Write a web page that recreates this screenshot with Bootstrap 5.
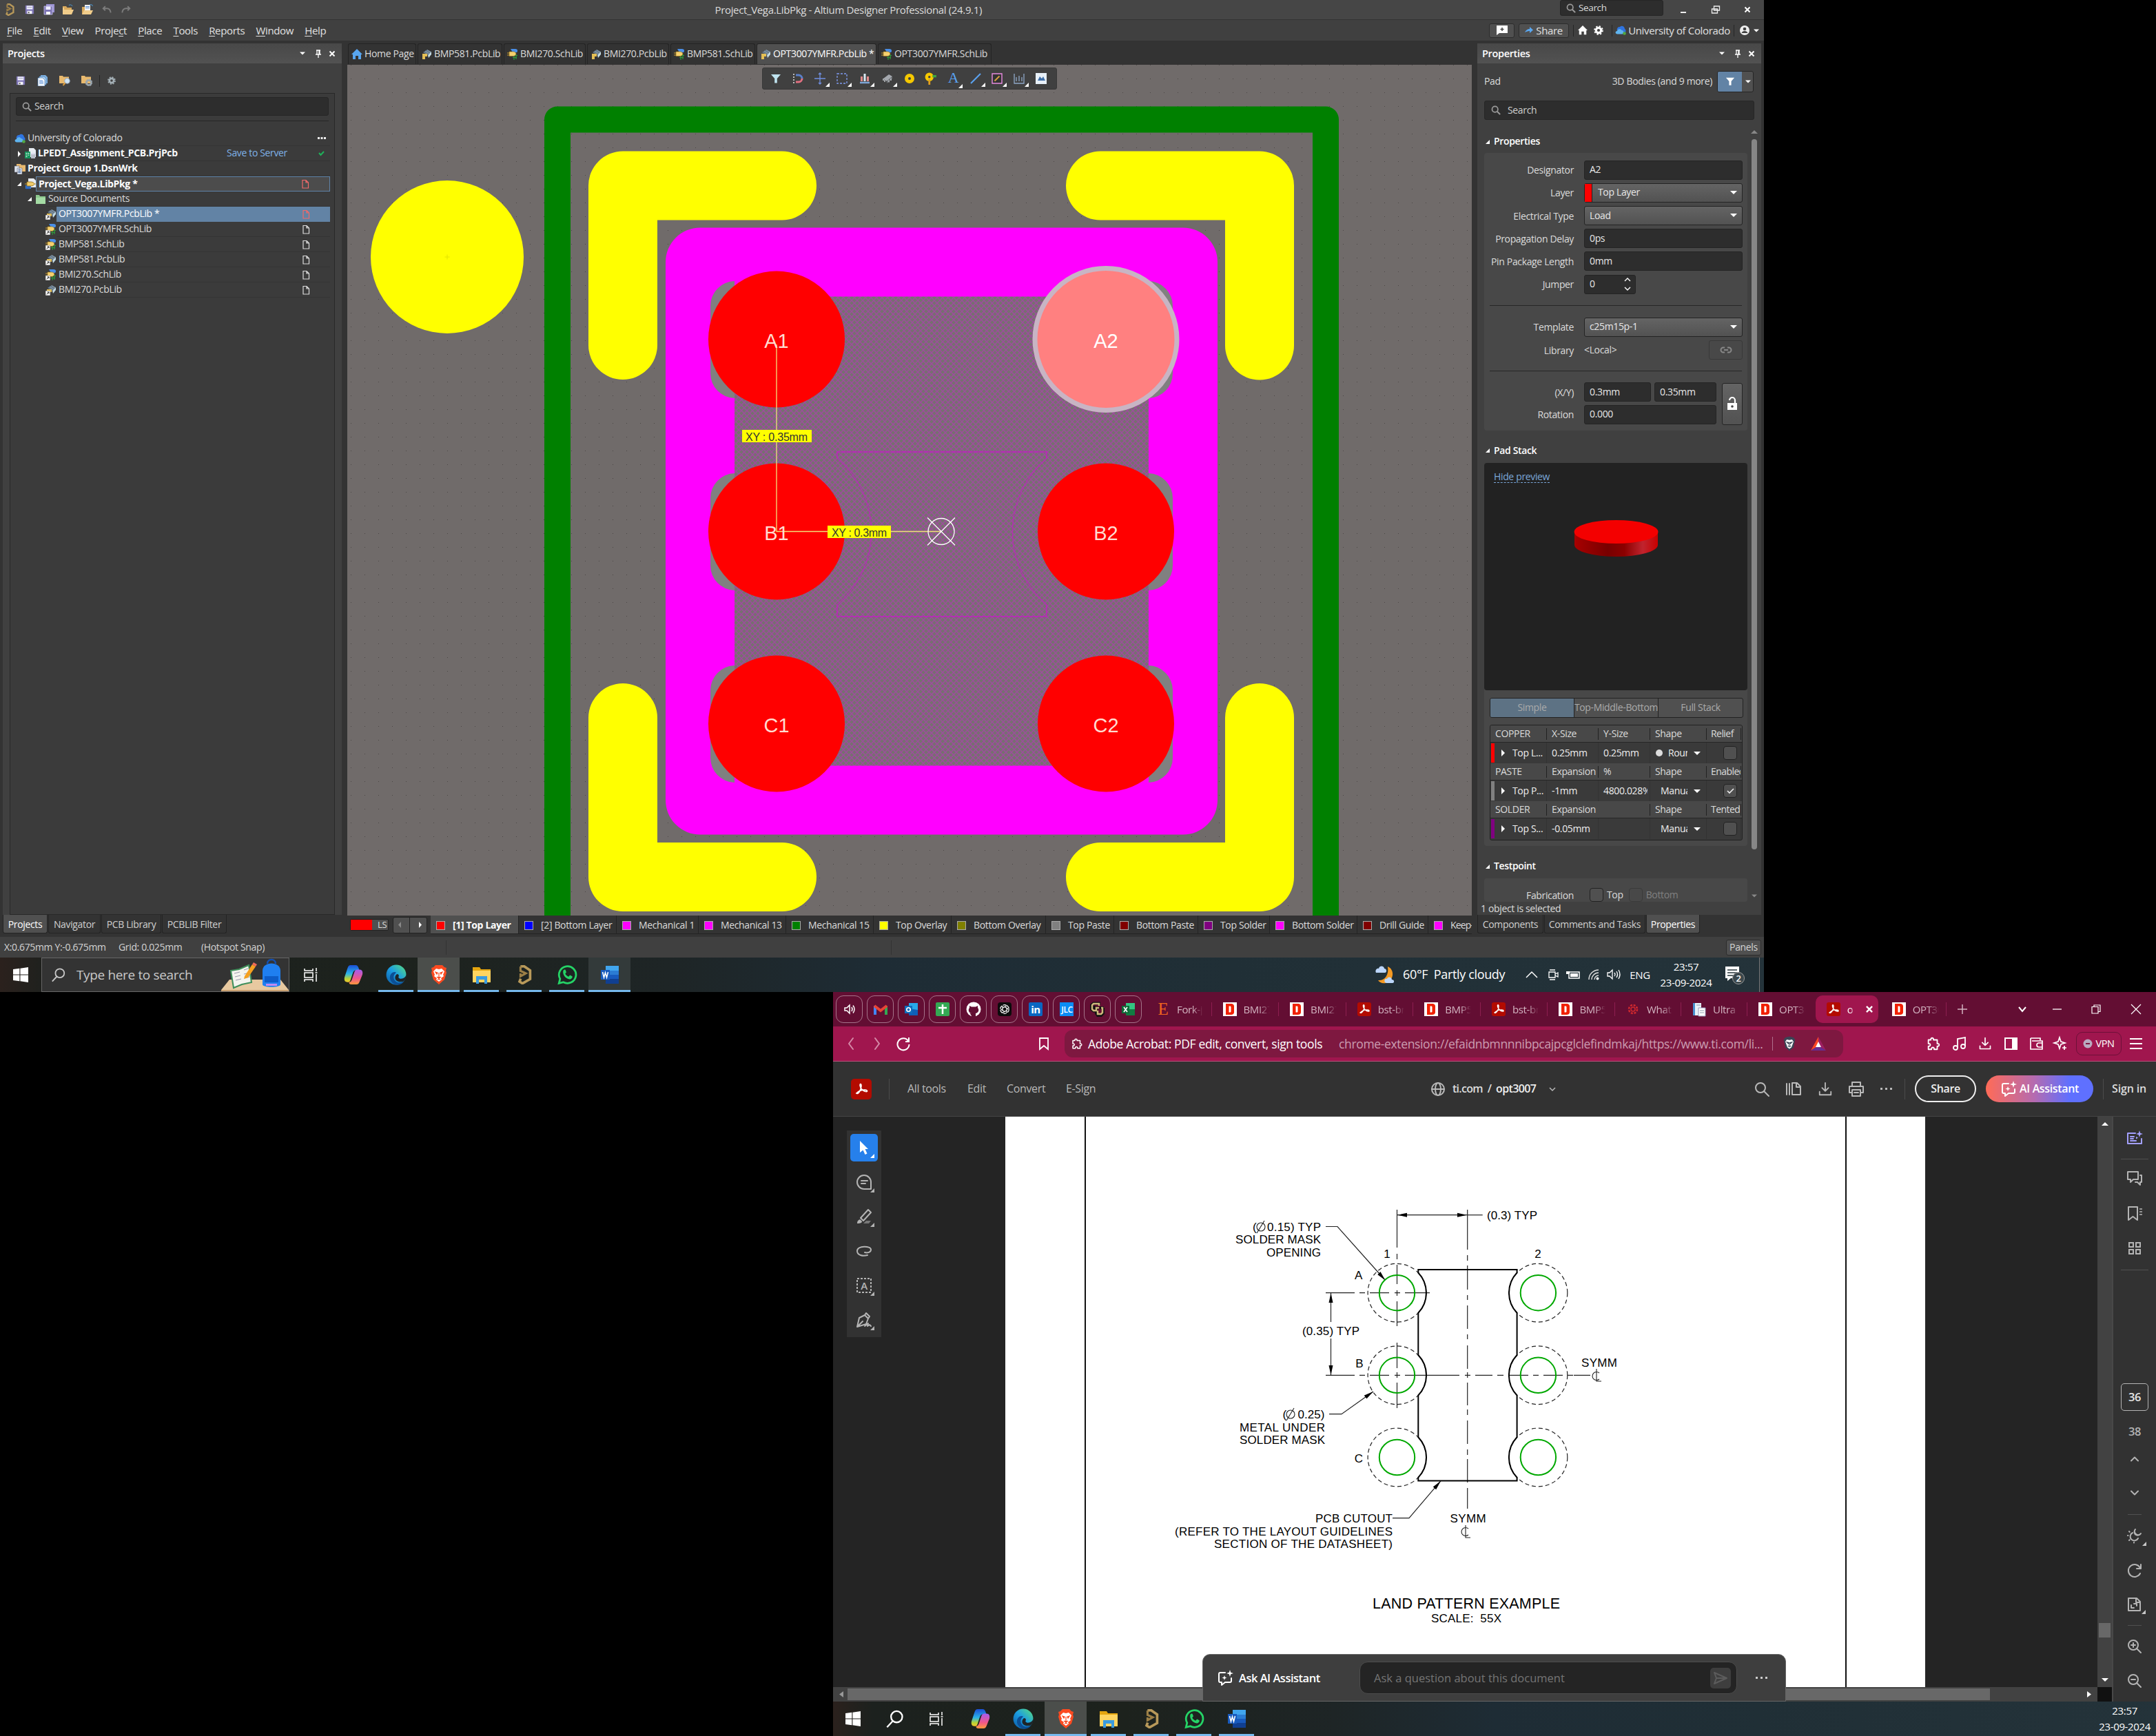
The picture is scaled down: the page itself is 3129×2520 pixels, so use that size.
<!DOCTYPE html>
<html lang="en">
<head>
<meta charset="utf-8">
<title>Altium Designer and Acrobat</title>
<link href="https://cdn.jsdelivr.net/npm/bootstrap@5.3.0/dist/css/bootstrap.min.css" rel="stylesheet">
<style>
body{margin:0;width:3129px;height:2520px;background:#000;overflow:hidden;font-family:"Open Sans","Noto Sans",sans-serif;font-size:14px;line-height:1.2;letter-spacing:-.025em;color:#dcdcdc}
svg{display:block;flex:none;overflow:visible}
.i12{width:12px;height:12px}.i14{width:14px;height:14px}.i16{width:16px;height:16px}.i18{width:18px;height:18px}.i20{width:20px;height:20px}.i22{width:22px;height:22px}.i24{width:24px;height:24px}.i28{width:28px;height:28px}.i30{width:30px;height:30px}
.ln{fill:none;stroke:currentColor;stroke-width:2;stroke-linecap:round;stroke-linejoin:round}
.gr{display:grid;align-items:center;justify-items:center}
.nw,.gr span,.d-flex span{white-space:pre}
b{font-weight:600}
u{text-underline-offset:2px;text-decoration-thickness:1px}
.clip{overflow:hidden}
/* monitor one */
.mon1{width:2560px;height:1440px;background:#333}
.titlebar{height:29px;background:#464646;border-bottom:1px solid #333;grid-template-columns:28px 29px 28px 28px 28px 28px 28px 2067px 150px 58px 36px 56px;justify-content:start}
.titlebar .ttl{font-size:15px;width:388px;margin-left:2px}
.menubar{height:30px;background:#404040;font-size:15px;color:#e0e0e0}
.mnu{padding-left:10px}
.mnu span{margin-right:16.2px}
.toppill{width:150px;height:23px;margin-top:-5px;background:#2d2d2d;border:1px solid #262626;border-radius:3px;font-size:13.5px}
.mbtn{height:21px;background:#505050;border:1px solid #2c2c2c;border-radius:3px}
.vsep{width:1px;height:17px;background:#262626}
.work{height:1301px;padding:4px 4px 0}
.panelhead{height:29px;background:linear-gradient(#484848,#525252);font-size:14.5px;color:#fff;padding:0 8px 0 7px}
.pnl{background:#404040}
.projpanel{width:492px;height:1265px}
.projtools{height:43px;padding-top:7px;grid-template-columns:32px 32px 32px 32px 4px 32px;justify-content:start;padding-left:10px}
.treebox{margin:0 10px;height:1193px;background:#3b3b3b;border:1px solid #282828}
.treebox b,.ly b{font-weight:700}
.searchbx{background:#2d2d2d;border:1px solid #262626;border-radius:3px;height:27px;color:#cfcfcf}
.treebox hr{margin:7px 8px 14px;border:0;height:1px;background:#262626;opacity:1}
.trow{height:22px;margin:0 6px}
.trow .tc{height:22px;border-bottom:1px solid #343434;padding-left:3px}
.lv1{padding-left:4px}.lv2{padding-left:19px}.lv3{padding-left:45px}
.arr{width:11px;font-size:9px;color:#fff}
.cur{border:1px solid #5f83a8!important;background:#4c4c4c;color:#fff}
.sel{background:#6283a5;border-color:#6283a5!important;color:#fff}
.dc{margin-right:29px;width:12px;height:14px}
.btabs{height:26px}
.btabs>div{height:27px;padding:3px 8px 0;border:1px solid #242424;border-top:0;border-radius:0 0 3px 3px;background:#333;display:flex;align-items:center;justify-content:center;margin-right:1px;font-size:14px;color:#d0d0d0;white-space:pre}
.btabs>.on{background:#505050;color:#fff}
.midcol{width:1632px;margin-left:8px;margin-right:8px}
.doctabs{height:31px;grid-template-columns:101px 125px 121px 121px 125px 176px 167px;justify-content:start}
.doctabs>div{height:30px;width:calc(100% - 2px);border:1px solid #242424;border-bottom:0;border-radius:3px 3px 0 0;padding-left:4px;gap:3px;font-size:14px;white-space:nowrap;align-self:start}
.doctabs>.on{background:#505050;color:#fff}
.pcb{position:relative;height:1235px}
.floatbar{position:absolute;left:602px;top:4px;width:428px;height:32px;background:#404040;border:1px solid #383838;border-radius:3px;grid-template-columns:32px 32px 32px 32px 34px 32px 31px 32px 33px 31px 32px 32px 32px;padding-left:3px}
.floatbar>div{position:relative}
.floatA{font:22px/18px "Liberation Serif",serif;color:#5aa2f0}
.tri::after{content:"";position:absolute;right:-6px;bottom:-4px;border:3px solid transparent;border-right-color:#fff;border-bottom-color:#fff}
.laytabs{height:27px;overflow:hidden;padding-left:4px}
.lsb{width:56px;height:17px;border:1px solid #222;border-radius:2px;background:#505050;margin-right:6px;font-size:13px}
.lsb i{width:31px;height:15px;background:#f00}
.pgr{width:50px;height:24px;background:#505050;border:1px solid #222;border-radius:3px;margin-right:5px;font-size:9px}
.ly{height:27px;padding-top:2px;border:1px solid #242424;border-width:0 1px 1px 0;padding-left:8px;flex:none;white-space:nowrap;gap:11px;font-size:14px}
.ly i{width:13px;height:13px;border:1px solid #aaa;flex:none}
.ly.on{background:#505050;color:#fff}
.w1{width:128px}.w2{width:142px}.w3{width:119px}.w4{width:127px}.w5{width:127px}.w6{width:113px}.w7{width:137px}.w8{width:99px}.w9{width:122px}.w10{width:104px}.w11{width:127px}.w12{width:103px}.w13{width:80px;letter-spacing:-.06em}
.c-r{background:#f00}.c-b{background:#00f}.c-m{background:#f0f}.c-g{background:#008000}.c-y{background:#ff0}.c-o{background:#808000}.c-gy{background:#808080}.c-dr{background:#800000}.c-p{background:#800080}
/* properties panel */
.proppanel{width:412px;height:1265px;overflow:hidden}
.filt{width:53px;height:31px;border:1px solid #262626;border-radius:3px;overflow:hidden;background:#505050}
.filt>div{width:35px;height:31px;background:#6283a5}
.scrollcol{width:20px}
.thumb1{width:8px;height:1031px;border-radius:4px;background:#868686}
.sech{height:33px;color:#fff;font-size:14px;gap:6px;padding-left:2px}
.sect{width:382px;background:#484848;border-radius:4px}
.prow{height:33.2px}
.plab{width:130px;text-align:right;margin-right:15px;padding-top:2px;flex:none}
.inp{height:28px;width:230px;background:#2d2d2d;border:1px solid #242424;border-radius:3px;padding:0 7px;color:#e8e8e8}
.sel1{background:linear-gradient(#646464,#525252)}
.caret{width:0;height:0;border:5px solid transparent;border-top-color:#fff;border-bottom:0;flex:none}
.caret.sm{transform:scale(.8)}
.caret.up{transform:rotate(180deg)}
.sect hr{margin:14px 8px;border:0;height:1px;background:#262626;opacity:1}
.preview{height:330px;background:#222;border-radius:4px}
.preview a{color:#7aa7d9;text-decoration:underline dashed 1px;text-underline-offset:3px;margin:12px 0 0 14px;display:inline-block;font-size:14px}
.seg{margin:11px 6px 10px 8px;height:29px;border:1px solid #222;border-radius:3px;background:#505050;color:#aaa;overflow:hidden}
.seg div{width:122.6px;display:flex;align-items:center;justify-content:center;border-right:1px solid #222;white-space:nowrap}
.seg .on{background:#5d7284}
.ptab{margin:0 7px 0 8px;height:168px;border:1px solid #222;border-radius:3px;overflow:hidden;background:#3a3a3a}
.pth,.ptr{display:grid;grid-template-columns:82px 75px 75px 82px 50px}
.pth{height:25px;background:#484848;align-items:center;border-bottom:1px solid #262626}
.pth span{border-right:1px solid #222;padding-left:7px;height:17px;overflow:hidden;white-space:nowrap}
.pth span:last-child{padding-left:6px;letter-spacing:-.04em}
.ptr{height:30px;align-items:stretch;color:#eee}
.ptr>div{display:flex;align-items:center;border-right:1px solid #333;padding-left:7px;overflow:hidden;white-space:nowrap}
.ptr>div:first-child{padding-left:0;gap:10px}
.ptr>div:last-child{padding-right:5px}
.ptr i.bar{width:5px;height:28px;margin-left:1px;flex:none}
.tk{width:20px;height:20px;border:1px solid #222;border-radius:4px;background:#505050;flex:none}
.statusb{height:30px;background:#404040;color:#d4d4d4}
.statusb .vsep{height:21px;background:#333}
/* taskbars */
.taskb{height:50px;color:#fff;background:linear-gradient(90deg,#2b211d 0,#1c211e 3%,#1d221d 22%,#1e2526 38%,#1e2c35 50%,#202f36 70%,#24333a 100%)}
.tbx{width:360px;height:50px;background:#333;border:1px solid #666;font-size:19px;color:#c8c8c8}
.cell{width:61px;margin-right:1px;height:50px;display:flex;align-items:center;justify-content:center;position:relative}
.run::after{content:"";position:absolute;bottom:0;left:5px;width:51px;height:3px;background:#76b9ed}
.hot{background:#4b4e4b}.hot2{background:#333a3a}.hot::after,.hot2::after{left:0;width:61px}
.tray{grid-template-columns:31px 31px 28px 31px 28px 48px 86px 56px 14px;margin-left:1px}
.clock{font-size:15px;line-height:23px;text-align:center}
/* monitor two */
.mon2{width:1920px;height:1080px;background:#242424}
.tabstrip{height:50px;background:#630e33;color:#d3b4c1;font-size:15px;padding-left:4px}
.pin{width:39px;height:40px;border:1.5px solid #a5748a;border-radius:11px;margin-right:6px;display:flex;align-items:center;justify-content:center;color:#fff}
.tb{width:97.6px;height:20px;border-right:1px solid #8d1e50;display:flex;align-items:center;gap:10px;padding-left:16px;flex:none;white-space:nowrap}
.tb span{width:38px;overflow:hidden;-webkit-mask-image:linear-gradient(90deg,#000 60%,transparent)}
.tb.act{background:#a0164e;height:40px;border-radius:10px;width:91px;border:0;margin-left:1px;color:#fff}
.tb.act span{width:9px}
.dlogo{width:20px;height:20px;background:#fff;flex:none}
.addr{height:51px;background:#a0164e;border-bottom:1px solid #b8517c;color:#fff}
.nav1{grid-template-columns:54px 22px 52px 356px;width:336px}
.urlb{width:1130px;height:40px;border-radius:12px;background:#7e1840;font-size:17.5px;padding-left:9px}
.exts{grid-template-columns:38px 37px 38px 37px 38px 30px;margin-left:112px;font-size:15px}
.vpn{width:66px;height:34px;border:1px solid #6d1038;border-radius:9px;font-size:14.5px;margin-left:8px}
.acro{height:80px;background:#323232;border-bottom:1px solid #454545;color:#b9b9b9;font-size:16px}
.acro .vs{width:1px;height:30px;background:#4b4b4b}
.alogo{width:30px;height:30px;border-radius:5px;background:#b30b00;color:#fff}
.alogo2{width:20px;height:20px;border-radius:3px;background:#b30b00;color:#fff;flex:none}
.shareb{width:89px;height:39px;border:2px solid #eee;border-radius:20px;color:#eee}
.aib{width:156px;height:39px;border-radius:20px;background:linear-gradient(90deg,#ff6b57,#b56bb0 45%,#5f70ff 78%);color:#fff}
.viewer{width:1856px;height:849px;position:relative}
.lefta{width:250px;height:828px;padding:20px 0 0 20px}
.ltool{width:50px;height:300px;background:#323232;color:#b4b4b4}
.ltool>div{width:40px;height:40px;margin:5px 5px 10px;position:relative;display:flex;align-items:center;justify-content:center}
.ltool>div.s{background:#2680eb;border-radius:5px;color:#fff}
.ltool>div.t::after{content:"";position:absolute;right:5px;bottom:5px;border:3px solid transparent;border-right-color:currentColor;border-bottom-color:currentColor}
.page{width:1335px;height:828px;background:#fff;flex:none}
.righta{width:250px}
.vbar{width:21px;background:#424242}
.vthumb{width:17px;height:21px;background:#686868;margin-top:722px}
.hbar{height:21px;background:#424242}
.hthumb{width:1658px;height:17px;background:#686868;margin-left:6px}
.askb{position:absolute;left:536px;top:780px;width:847px;height:69px;background:#3e3e3e;border:1px solid #666;border-radius:11px 11px 0 0;color:#fff;font-size:16.5px}
.askb b{letter-spacing:-.03em}
.askin{width:548px;height:47px;background:#242424;border:1.5px solid #4d4d4d;border-radius:12px;color:#757575;font-size:16.5px;padding:0 8px 0 20px}
.sendb{width:30px;height:30px;border-radius:5px;background:#3e3e3e;color:#5c5c5c}
.rpanel{width:64px;height:849px;padding-top:1px;background:#323232;border-left:2px solid #484848;color:#b4b4b4;grid-template-rows:60px 0 58px 44px 56px 6px 160px 44px 56px 24px 15px 44px 18px 44px 58px 40px 20px 42px 58px;font-size:16.5px}
.rpanel hr{margin:0;width:40px;height:1px;border:0;background:#505050;opacity:1}
.rpanel hr.sh{width:20px}
.rpanel .tri{position:relative}
.rpanel .tri::after{border-right-color:#c8c8c8;border-bottom-color:#c8c8c8}
.pgn{width:40px;height:40px;border:1px solid #b4b4b4;border-radius:5px;color:#e6e6e6}
</style>
<script src="https://cdn.jsdelivr.net/npm/bootstrap@5.3.0/dist/js/bootstrap.bundle.min.js"></script>
</head>
<body>
<svg width="0" height="0" class="position-absolute">
<defs>
<linearGradient id="gEdge" x1="0" y1="1" x2="1" y2="0"><stop offset="0" stop-color="#0c59a4"/><stop offset=".5" stop-color="#1b9de2"/><stop offset="1" stop-color="#5be07a"/></linearGradient>
<linearGradient id="gCo1" x1="0" y1="0" x2="0" y2="1"><stop offset="0" stop-color="#1b4fd8"/><stop offset=".5" stop-color="#2bb4e8"/><stop offset=".8" stop-color="#b9d334"/><stop offset="1" stop-color="#f5c52c"/></linearGradient>
<linearGradient id="gCo2" x1="0" y1="0" x2="0" y2="1"><stop offset="0" stop-color="#a45cf0"/><stop offset=".6" stop-color="#f0568a"/><stop offset="1" stop-color="#ff9a3c"/></linearGradient>
<linearGradient id="gDisk" x1="0" x2="1"><stop offset="0" stop-color="#a80000"/><stop offset=".4" stop-color="#780000"/><stop offset=".6" stop-color="#8c0000"/><stop offset=".82" stop-color="#c0242e"/><stop offset="1" stop-color="#c80000"/></linearGradient>
<symbol id="save" viewBox="0 0 16 16"><path d="M1 1h14v14H1z" fill="#7d74b4"/><path d="M3 1.500h10v6H3z" fill="#eef"/><path d="M4 10h8v5H4z" fill="#f4f4fa"/><path d="M5.500 11.500h2V14h-2z" fill="#555"/><path d="M4 4h8" stroke="#99a" stroke-width="1"/></symbol>
<symbol id="saveall" viewBox="0 0 16 16"><path d="M4 0h12v12H4z" fill="#9d94d4"/><path d="M1 3h12v12H1z" fill="#7d74b4" stroke="#c8c4ee" stroke-width=".8"/><path d="M3.500 3.500h7v4.500h-7z" fill="#eef"/><path d="M4 11h6v4H4z" fill="#fff"/></symbol>
<symbol id="fold" viewBox="0 0 16 16"><path d="M0 3h5l1.500 2H13v3H0z" fill="#d9a95c"/><path d="M0 15V5h2v3h14l-3 7z" fill="#f0cc8a"/><path d="M9 2c2-2 4-1 5 1" fill="none" stroke="#4a7fa8" stroke-width="1.300"/></symbol>
<symbol id="folddoc" viewBox="0 0 16 16"><path d="M0 4h5v11H0z" fill="#d9a95c"/><path d="M4 1h8v9H4z" fill="#f4f4f4"/><path d="M5 3.500h6M5 5.500h6" stroke="#5a8fd8"/><path d="M0 15l3-6h13l-3 6z" fill="#f0cc8a"/><path d="M11 1c2-1 4 0 4.500 2" fill="none" stroke="#4a7fa8" stroke-width="1.300"/></symbol>
<symbol id="undo" viewBox="0 0 16 16"><path d="M5.500 2.500L2 6l3.500 3.500M2 6h6c4 0 6 2.500 6.500 7" fill="none" stroke="#7c7c7c" stroke-width="2.200"/></symbol>
<symbol id="alt" viewBox="0 0 16 20"><path d="M4 1.500l3.500-.5L14 5.500v9L6 19l-3-2 1.200-3" fill="none" stroke="#b8995a" stroke-width="2.600"/><path d="M4 1.500v4.500l5.500 2.500-5.500 3V8.500" fill="none" stroke="#9c7f46" stroke-width="2.200"/></symbol>
<symbol id="mag" viewBox="0 0 16 16"><circle cx="6.500" cy="6.500" r="4.800" fill="none" stroke="#9a9a9a" stroke-width="2"/><path d="M10 10l5 5" stroke="#9a9a9a" stroke-width="2.400"/></symbol>
<symbol id="copyd" viewBox="0 0 16 16"><path d="M5 0h7l3 3v9H5z" fill="#7db0e0"/><path d="M3 2h7l3 3v9H3z" fill="#a8cdf0" stroke="#3a6ea8" stroke-width=".6"/><path d="M1 4h7l3 3v9H1z" fill="#f2f6fb" stroke="#3a6ea8" stroke-width=".6"/><path d="M3 8h5M3 10h6M3 12h6" stroke="#5a8fd8"/></symbol>
<symbol id="foldmag" viewBox="0 0 16 16"><path d="M0 1h5l1 1.500h8V12H0z" fill="#e8b96e"/><circle cx="11.500" cy="8.500" r="3.800" fill="#cfe4f5" stroke="#9ab"/><path d="M8.500 11.500L5.500 15" stroke="#d99a3c" stroke-width="2"/></symbol>
<symbol id="foldgear" viewBox="0 0 16 16"><path d="M0 1h5l1 1.500h8V12H0z" fill="#e8b96e"/><circle cx="11" cy="11" r="3.500" fill="none" stroke="#9aa5ad" stroke-width="2.600"/><circle cx="11" cy="11" r="5" fill="none" stroke="#9aa5ad" stroke-width="1" stroke-dasharray="2 1.900"/></symbol>
<symbol id="gear" viewBox="0 0 16 16"><circle cx="8" cy="8" r="4.200" fill="none" stroke="currentColor" stroke-width="3.600"/><circle cx="8" cy="8" r="6.800" fill="none" stroke="currentColor" stroke-width="2" stroke-dasharray="2.700 2.640"/></symbol>
<symbol id="cloud" viewBox="0 0 16 14"><path d="M4 9a4 4 0 0 1 3-7c3-3 7 0 7 3 2 1 2 5 0 5.500H5z" fill="#2f74e0"/><path d="M3.500 12.500C0 12.500-.5 8.500 3 8c.5-3 5-4 6.500-1 3-.5 4.500 5 1 5.500z" fill="#5fb4ef"/><circle cx="13.500" cy="11.500" r="2.300" fill="#52a843"/></symbol>
<symbol id="prj" viewBox="0 0 16 16"><path d="M6 0h7l3 3v10H6z" fill="#e8ecf2"/><path d="M0 5h8v10H0z" fill="#14935a"/><path d="M1.500 7.500h2M4.500 7.500h2M1.500 10h2M4.500 10h2M1.500 12.500h2" stroke="#fff"/><path d="M9 8h6v7H9z" fill="#b8bcc8"/><ellipse cx="12" cy="8" rx="3" ry="1.300" fill="#dde"/></symbol>
<symbol id="grp" viewBox="0 0 16 16"><path d="M3 1h6l1 1.500h6V12H3z" fill="#e8b96e"/><path d="M0 4h7v9H0zM4 7h7v9H4z" fill="#dfe6f0" stroke="#667" stroke-width=".6"/><path d="M5.500 9.500h4M5.500 11.500h4M5.500 13.500h4" stroke="#5a7db0"/></symbol>
<symbol id="lib" viewBox="0 0 16 16"><path d="M5 0h8l3 3v10H5z" fill="#e8ecf2"/><path d="M1 10h8v5H1z" fill="#3a7bd5"/><path d="M3 9v7M6 9v7" stroke="#1b4fa0"/><path d="M3 5h6c3 0 5 2 5 3s-2 3-5 3H3z" fill="#f0cc6a" stroke="#8a6a1a" stroke-width=".8"/><path d="M0 8h3M14 8h2" stroke="#c89a2a"/></symbol>
<symbol id="gfold" viewBox="0 0 16 16"><path d="M1 2h5l1 2h8v11H1z" fill="#8ec98e"/><path d="M1 6h14v9H1z" fill="#a4dba4"/></symbol>
<symbol id="pcbi" viewBox="0 0 16 16"><path d="M3 5l6-4 6 3-5 5z" fill="#66798a"/><path d="M6 3l6 4M9 1.500l5 3.500" stroke="#95a8b8" stroke-width=".8"/><path d="M10 9l5-5v4l-4 5z" fill="#c3dbe5"/><path d="M2 7h7v4H6v4H2z" fill="#e4bf55"/></symbol>
<symbol id="schi" viewBox="0 0 16 16"><path d="M5 0h7c3 0 4 3 2 5H8z" fill="#4a8fe8"/><path d="M8 9.500h7M8 12.500h6M10 8v8M13 8v7" stroke="#2f9a3a" stroke-width="1.200"/><path d="M3 4h6c2 0 4 1.500 4 3s-2 3.500-4 3.500H3z" fill="#f5d06e" stroke="#8a6a1a" stroke-width=".6"/><path d="M0 6h3M0 9h3" stroke="#c89a2a" stroke-width="1.200"/></symbol>
<symbol id="lnk" viewBox="0 0 8 8"><path d="M0 0h8v8H0z" fill="#fff" stroke="#333" stroke-width=".6"/><path d="M2 6l3-3M3 2.300h2.700V5" stroke="#000" fill="none"/></symbol>
<symbol id="doc" viewBox="0 0 12 14"><path d="M2 1.500h5l3.500 3.500v8H2zM7 1.500V5h3.500" fill="none" stroke="currentColor" stroke-width="1.200"/></symbol>
<symbol id="pinic" viewBox="0 0 12 12"><path d="M3 1h6M4 1v6M8 1v6M7 1v6M2 7h8M6 7v5" stroke="#fff" stroke-width="1.300" fill="none"/></symbol>
<symbol id="xx" viewBox="0 0 12 12"><path d="M2.500 2.500l7 7M9.500 2.500l-7 7" stroke="currentColor" stroke-width="2"/></symbol>
<symbol id="house" viewBox="0 0 16 16"><path d="M8 0l8 8h-2v7h-4v-5H6v5H2V8H0z" fill="currentColor"/></symbol>
<symbol id="funnel" viewBox="0 0 16 16"><path d="M1 2h14L9.800 8v6.500H6.200V8z" fill="currentColor"/></symbol>
<symbol id="chipb" viewBox="0 0 16 16"><path d="M2 8l8-6 5 3-8 7z" fill="#a4a8ae"/><path d="M7 12l8-7v3l-8 7z" fill="#6e7276"/><path d="M2 8v3M4 9.500v3.500M10 10.500v3M13 8v3" stroke="#d0d4da" stroke-width="1.300"/></symbol>
<symbol id="start" viewBox="0 0 20 20"><path d="M0 2.800L8.500 1.600V9.500H0zM9.500 1.500L20 0v9.500H9.500zM0 10.500h8.500v7.900L0 17.200zM9.500 10.500H20V20L9.500 18.500z" fill="#fff"/></symbol>
<symbol id="tview" viewBox="0 0 24 24"><path d="M3 3v3h12V3M3 22v-3h12v3M3 9h12v7H3zM20 2v5M20 11v11M18.500 9h3" fill="none" stroke="#fff" stroke-width="1.500"/></symbol>
<symbol id="mag2" viewBox="0 0 24 24"><circle cx="14" cy="9.500" r="7" fill="none" stroke="currentColor" stroke-width="2"/><path d="M9 15l-7 7.500" stroke="currentColor" stroke-width="2"/></symbol>
<symbol id="copilot" viewBox="0 0 28 28"><path d="M10 1h7c2 0 3 1 4 4l1 3h-5c-2 0-3 1-4 4l-3 9c-1 3-2 3-4 3-4 0-5-3-4-7l4-12c1-3 2-4 4-4z" fill="url(#gCo1)"/><path d="M18 27h-7c-2 0-3-1-3-3 2 0 3-1 4-4l3-9c1-3 2-4 5-4h2c4 0 5 3 4 7l-4 10c-1 2-2 3-4 3z" fill="url(#gCo2)"/></symbol>
<symbol id="edge" viewBox="0 0 28 28"><circle cx="14" cy="14" r="13.500" fill="url(#gEdge)"/><path d="M12 13c-3 4-1 9 3 11 3 1 7 1 10-2-3 6-9 6.500-13 5C5 24 3 15 9 11c2-1 4-1 5 0z" fill="#0c4f95"/><path d="M15 13c3 0 3 3 2 4 0 2 3 3 6 2s4-3 4.500-5c1 3-1 8-4 9-6 2-11-1-11-5 0-2 1-4 2.500-5z" fill="#1e2428"/></symbol>
<symbol id="brave" viewBox="0 0 24 28"><path d="M7 0h10l3 3 3 1-1 4 1 3-3 10-8 7-8-7L1 11l1-3-1-4 3-1z" fill="#fb4a20"/><path d="M8 5l4 1 4-1 4 4-2 5 1 2-4 3 1 2-4 3-4-3 1-2-4-3 1-2-2-5z" fill="#fff"/><path d="M7 10l3 1-1 2zM17 10l-3 1 1 2zM12 11v6M9 17l3 2 3-2M10 21l2-1 2 1" fill="#fb4a20" stroke="#fb4a20" stroke-width="1.200"/></symbol>
<symbol id="expl" viewBox="0 0 28 28"><path d="M1 3h10l2 3h14v19H1z" fill="#e5a50f"/><path d="M1 8h26v17H1z" fill="#ffd460"/><path d="M6 27V16h16v11h-4v-6h-8v6z" fill="#3a9be0"/></symbol>
<symbol id="wapp" viewBox="0 0 28 28"><path d="M3 25.500l1.500-6A11.500 11.500 0 1 1 9 24z" fill="none" stroke="#25d366" stroke-width="2.600"/><path d="M9 8c1-1.500 3-1 3 0l1 2.500-1.500 2c1 2 2.500 3 4.500 4l2-2 3 1.500c1 1-1 4-3.500 4C12 20 7 13 9 8z" fill="#25d366"/></symbol>
<symbol id="word" viewBox="0 0 28 28"><path d="M8 1h19v7H8z" fill="#41a5ee"/><path d="M8 8h19v6H8z" fill="#2b7cd3"/><path d="M8 14h19v6H8z" fill="#185abd"/><path d="M8 20h19v7H8z" fill="#103f91"/><path d="M1 7h13v14H1z" fill="#185abd"/><path d="M3.500 10l2 8 2-7 2 7 2-8" fill="none" stroke="#fff" stroke-width="1.600"/></symbol>
<symbol id="acr" viewBox="0 0 20 20"><path d="M4 15c2 2 6-4 6-9 0-3-2-3-1.500 0C9 10 13 13 16 13c2 0 1-2-1-2-4-.5-8 1-11 4z" fill="none" stroke="#fff" stroke-width="1.400"/></symbol>
<symbol id="dg" viewBox="0 0 20 20"><path d="M4 2h7c4 0 5 2 5 4v8c0 3-2 4-5 4H4z" fill="#f02000"/><path d="M8.500 5.500h1.500c1 0 1.500.5 1.500 1.500v6c0 1-.5 1.500-1.500 1.500H8.500z" fill="#fff"/></symbol>
<symbol id="puz" viewBox="0 0 24 24"><path class="ln" d="M4 6h4c-1-4 5-4 4 0h6v6c4-1 4 5 0 4v5h-5c1-4-5-4-4 0H4v-5c4 1 4-5 0-4z"/></symbol>
<symbol id="dl" viewBox="0 0 24 24"><path class="ln" d="M12 2v13M7 10l5 5 5-5M3 16v5h18v-5"/></symbol>
<symbol id="aic" viewBox="0 0 24 24"><path class="ln" d="M12 4H5a2 2 0 0 0-2 2v10a2 2 0 0 0 2 2h2v4l5-4h7a2 2 0 0 0 2-2v-4"/><path d="M19 0l1.200 3.800L24 5l-3.800 1.200L19 10l-1.200-3.800L14 5l3.800-1.200zM11 8l.9 2.600 2.600.9-2.600.9L11 15l-.9-2.600-2.600-.9 2.600-.9z" fill="currentColor"/></symbol>
<symbol id="chu" viewBox="0 0 16 16"><path class="ln" d="M3 10.500l5-5 5 5"/></symbol>
<symbol id="chd" viewBox="0 0 16 16"><path class="ln" d="M3 5.500l5 5 5-5"/></symbol>
</defs>
</svg>

<main class="d-flex flex-column">
<!-- Monitor one: Altium Designer -->
<section class="mon1">
 <div class="gr titlebar">
  <svg class="i18"><use href="#alt"/></svg><svg class="i14"><use href="#save"/></svg><svg class="i16"><use href="#saveall"/></svg><svg class="i16"><use href="#fold"/></svg><svg class="i16"><use href="#folddoc"/></svg><svg class="i14"><use href="#undo"/></svg><svg class="i14" style="transform:scaleX(-1)"><use href="#undo"/></svg>
  <span class="ttl">Project_Vega.LibPkg - Altium Designer Professional (24.9.1)</span>
  <div class="toppill d-flex align-items-center ps-1 gap-1"><svg class="i14 ms-1"><use href="#mag"/></svg><span>Search</span></div>
  <svg class="i12"><path d="M2 10h8" stroke="#eee" stroke-width="2"/></svg>
  <svg class="i12"><path d="M3.500 1h8v6h-8zM.5 5h8v6h-8z" fill="#464646" stroke="#eee" stroke-width="1.300"/></svg>
  <svg class="i12 text-white"><use href="#xx"/></svg>
 </div>
 <div class="menubar d-flex align-items-center">
  <div class="mnu d-flex"><span><u>F</u>ile</span><span><u>E</u>dit</span><span><u>V</u>iew</span><span>Proje<u>c</u>t</span><span><u>P</u>lace</span><span><u>T</u>ools</span><span><u>R</u>eports</span><span><u>W</u>indow</span><span><u>H</u>elp</span></div>
  <div class="d-flex align-items-center ms-auto" style="padding-right:6px">
   <div class="mbtn d-flex align-items-center justify-content-center" style="width:37px"><svg width="16" height="14"><path d="M0 0h16v11H4l-4 3z" fill="#fff"/><path d="M8 3v5M5.500 5.500h5" stroke="#444" stroke-width="1.500"/></svg></div>
   <div class="mbtn d-flex align-items-center justify-content-center gap-1" style="width:73px;margin-left:6px"><svg width="12" height="10"><path d="M0 8c1-3 4-5 7-5V0l5 4.500L7 9V6C4 6 2 7 0 8z" fill="#5aa7f0"/></svg><span>Share</span></div>
   <i class="vsep" style="margin:0 6px"></i><svg class="i14 text-white"><use href="#house"/></svg><svg class="i14 text-white" style="margin:0 6px 0 9px"><use href="#gear"/></svg><i class="vsep" style="margin:0 4px 0 6px"></i><svg class="i16"><use href="#cloud"/></svg><span style="margin:0 5px 0 3px">University of Colorado</span><i class="vsep"></i>
   <svg class="i14" style="margin:0 5px 0 8px"><circle cx="7" cy="7" r="7" fill="#eee"/><circle cx="7" cy="5" r="2.300" fill="#404040"/><path d="M2.500 11c1-4 8-4 9 0z" fill="#404040"/></svg><i class="caret sm"></i>
  </div>
 </div>
 <div class="work d-flex align-items-start">
  <!-- Projects panel -->
  <div>
   <div class="projpanel pnl">
    <div class="panelhead d-flex align-items-center"><b>Projects</b><div class="d-flex align-items-center ms-auto gap-2"><i class="caret sm me-1"></i><svg class="i12"><use href="#pinic"/></svg><svg class="i12 text-white"><use href="#xx"/></svg></div></div>
    <div class="gr projtools"><svg class="i14"><use href="#save"/></svg><svg class="i16"><use href="#copyd"/></svg><svg class="i16"><use href="#foldmag"/></svg><svg class="i16"><use href="#foldgear"/></svg><i class="vsep"></i><svg class="i12" style="color:#a4b0b6"><use href="#gear"/></svg></div>
    <div class="treebox">
     <div class="searchbx d-flex align-items-center gap-1 ps-1" style="margin:5px 8px 0"><svg class="i14 ms-1"><use href="#mag"/></svg><span>Search</span></div>
     <hr>
     <div class="trow d-flex align-items-center"><svg class="i16"><use href="#cloud"/></svg><div class="tc flex-grow-1 d-flex align-items-center justify-content-between"><span>University of Colorado</span><svg width="12" height="3" style="margin-right:6px"><path d="M0 0h3v3H0zM4.500 0h3v3h-3zM9 0h3v3H9z" fill="#eee"/></svg></div></div>
     <div class="trow lv1 d-flex align-items-center"><i class="arr"><svg width="6" height="9"><path d="M1 0l4 4.500L1 9z" fill="#fff"/></svg></i><svg class="i16"><use href="#prj"/></svg><div class="tc flex-grow-1 d-flex align-items-center"><b class="text-light">LPEDT_Assignment_PCB.PrjPcb</b><span class="ms-auto" style="color:#7fb2e8;margin-right:45px">Save to Server</span><svg width="9" height="7" style="margin-right:8px"><path d="M1 3l2.500 3L8 1" fill="none" stroke="#1fb25a" stroke-width="2"/></svg></div></div>
     <div class="trow d-flex align-items-center"><svg class="i16"><use href="#grp"/></svg><div class="tc flex-grow-1 d-flex align-items-center"><b class="text-light">Project Group 1.DsnWrk</b></div></div>
     <div class="trow lv1 d-flex align-items-center"><i class="arr"><svg width="6" height="6"><path d="M6 0v6H0z" fill="#fff"/></svg></i><svg class="i16"><use href="#lib"/></svg><div class="tc cur flex-grow-1 d-flex align-items-center"><b>Project_Vega.LibPkg *</b><svg class="dc ms-auto" style="color:#f06a6a"><use href="#doc"/></svg></div></div>
     <div class="trow lv2 d-flex align-items-center"><i class="arr"><svg width="6" height="6"><path d="M6 0v6H0z" fill="#fff"/></svg></i><svg class="i16"><use href="#gfold"/></svg><div class="tc flex-grow-1 d-flex align-items-center"><span>Source Documents</span></div></div>
     <div class="trow lv3 d-flex align-items-center"><svg class="i16" viewBox="0 0 16 16"><use href="#pcbi" width="16" height="16"/><use href="#lnk" y="9" width="7" height="7"/></svg><div class="tc sel flex-grow-1 d-flex align-items-center"><span>OPT3007YMFR.PcbLib *</span><svg class="dc ms-auto" style="color:#f06a6a"><use href="#doc"/></svg></div></div>
     <div class="trow lv3 d-flex align-items-center"><svg class="i16" viewBox="0 0 16 16"><use href="#schi" width="16" height="16"/><use href="#lnk" y="9" width="7" height="7"/></svg><div class="tc flex-grow-1 d-flex align-items-center"><span>OPT3007YMFR.SchLib</span><svg class="dc ms-auto"><use href="#doc"/></svg></div></div>
     <div class="trow lv3 d-flex align-items-center"><svg class="i16" viewBox="0 0 16 16"><use href="#schi" width="16" height="16"/><use href="#lnk" y="9" width="7" height="7"/></svg><div class="tc flex-grow-1 d-flex align-items-center"><span>BMP581.SchLib</span><svg class="dc ms-auto"><use href="#doc"/></svg></div></div>
     <div class="trow lv3 d-flex align-items-center"><svg class="i16" viewBox="0 0 16 16"><use href="#pcbi" width="16" height="16"/><use href="#lnk" y="9" width="7" height="7"/></svg><div class="tc flex-grow-1 d-flex align-items-center"><span>BMP581.PcbLib</span><svg class="dc ms-auto"><use href="#doc"/></svg></div></div>
     <div class="trow lv3 d-flex align-items-center"><svg class="i16" viewBox="0 0 16 16"><use href="#schi" width="16" height="16"/><use href="#lnk" y="9" width="7" height="7"/></svg><div class="tc flex-grow-1 d-flex align-items-center"><span>BMI270.SchLib</span><svg class="dc ms-auto"><use href="#doc"/></svg></div></div>
     <div class="trow lv3 d-flex align-items-center"><svg class="i16" viewBox="0 0 16 16"><use href="#pcbi" width="16" height="16"/><use href="#lnk" y="9" width="7" height="7"/></svg><div class="tc flex-grow-1 d-flex align-items-center"><span>BMI270.PcbLib</span><svg class="dc ms-auto"><use href="#doc"/></svg></div></div>
    </div>
   </div>
   <div class="btabs d-flex"><div class="on" style="width:65px">Projects</div><div style="width:76px">Navigator</div><div style="width:87px">PCB Library</div><div style="width:94px">PCBLIB Filter</div></div>
  </div>
  <!-- Editor -->
  <div class="midcol">
   <div class="gr doctabs">
    <div class="d-flex align-items-center"><svg class="i16" style="color:#58a6f0"><use href="#house"/></svg><span>Home Page</span></div>
    <div class="d-flex align-items-center"><svg class="i16"><use href="#pcbi"/></svg><span>BMP581.PcbLib</span></div>
    <div class="d-flex align-items-center"><svg class="i16"><use href="#schi"/></svg><span>BMI270.SchLib</span></div>
    <div class="d-flex align-items-center"><svg class="i16"><use href="#pcbi"/></svg><span>BMI270.PcbLib</span></div>
    <div class="d-flex align-items-center"><svg class="i16"><use href="#schi"/></svg><span>BMP581.SchLib</span></div>
    <div class="d-flex align-items-center on"><svg class="i16"><use href="#pcbi"/></svg><span>OPT3007YMFR.PcbLib *</span></div>
    <div class="d-flex align-items-center"><svg class="i16"><use href="#schi"/></svg><span>OPT3007YMFR.SchLib</span></div>
   </div>
   <div class="pcb">
    <svg width="1632" height="1235" viewBox="504 94 1632 1235" style="overflow:hidden">
     <defs>
      <pattern id="dots" x="499" y="104" width="20" height="20" patternUnits="userSpaceOnUse"><rect x="10" y="10" width="1" height="1" fill="#4c4846"/></pattern>
      <pattern id="hat" width="8" height="8" patternUnits="userSpaceOnUse"><rect width="8" height="8" fill="#76706f"/><path d="M0 0l8 8M8 0L0 8" stroke="#9d4d9d" stroke-width="1.500"/></pattern>
     </defs>
     <rect x="504" y="94" width="1632" height="1235" fill="#706b6a"/><rect x="504" y="94" width="1632" height="1235" fill="url(#dots)"/>
     <rect x="809" y="173.500" width="1115" height="1300" fill="none" stroke="#008000" stroke-width="38" stroke-linejoin="round"/>
     <circle cx="649" cy="373" r="111" fill="#ff0"/><path d="M645.500 373h7M649 369.500v7" stroke="#e4e400"/>
     <g fill="none" stroke="#ff0" stroke-width="100" stroke-linecap="round" stroke-linejoin="round"><path d="M904 501V269.500h231M1597 269.500h231v232M904 1042v231h231M1597 1273h231v-231"/></g>
     <rect x="1016" y="380.500" width="701" height="781" fill="url(#hat)" stroke="#f0f" stroke-width="100" stroke-linejoin="round"/>
     <g fill="#808080"><path d="M1066 408a36 36 0 0 0-35 36v98a36 36 0 0 0 35 36zM1066 687a36 36 0 0 0-35 36v98a36 36 0 0 0 35 36zM1066 966a36 36 0 0 0-35 36v98a36 36 0 0 0 35 36z"/><path d="M1667 408a36 36 0 0 1 35 36v98a36 36 0 0 1-35 36zM1667 687a36 36 0 0 1 35 36v98a36 36 0 0 1-35 36zM1667 966a36 36 0 0 1 35 36v98a36 36 0 0 1-35 36z"/></g>
     <g fill="none" stroke="#c020c0" stroke-width="1.500"><path d="M1215 665.500V656h304v9.500M1215 877.500V895h304v-17.500"/><path d="M1215 665.500a138 138 0 0 1 0 212M1519 665.500a138 138 0 0 0 0 212" stroke-opacity=".7"/></g>
     <g fill="#f00"><circle cx="1127" cy="492.500" r="99"/><circle cx="1127" cy="771.500" r="99"/><circle cx="1127" cy="1050.500" r="99"/><circle cx="1605" cy="771.500" r="99"/><circle cx="1605" cy="1050.500" r="99"/></g>
     <circle cx="1605" cy="492.500" r="103" fill="#ff8080" stroke="#c8b4c4" stroke-width="7"/>
     <path d="M1127 500v271.500h239" fill="none" stroke="#f2e27a" stroke-width="1.300"/>
     <g fill="none" stroke="#fff" stroke-width="1.300"><circle cx="1366" cy="771.500" r="19"/><path d="M1346 751.500l40 40M1386 751.500l-40 40"/></g>
     <g fill="#ffdcd0" font-family="Liberation Sans" font-size="29" text-anchor="middle" letter-spacing="0"><text x="1127" y="505">A1</text><text x="1605" y="505" fill="#fff">A2</text><text x="1127" y="784">B1</text><text x="1605" y="784">B2</text><text x="1127" y="1063">C1</text><text x="1605" y="1063">C2</text></g>
     <path d="M1077 624h101v18h-101zM1201 763h92v18h-92z" fill="#ff0"/>
     <g fill="#333" font-family="Liberation Sans" font-size="16" letter-spacing="0" text-anchor="middle"><text x="1127" y="640" textLength="90">XY : 0.35mm</text><text x="1247" y="779" textLength="80">XY : 0.3mm</text></g>
    </svg>
    <div class="floatbar gr">
     <div><svg class="i16" style="color:#bfe3ef"><use href="#funnel"/></svg></div>
     <div><svg class="i16" viewBox="0 0 16 16"><path d="M5 3h4a5 5 0 0 1 5 5" fill="none" stroke="#5a7fc8" stroke-width="3"/><path d="M14 8a5 5 0 0 1-5 5H5" fill="none" stroke="#e07080" stroke-width="3"/><path d="M2 1v14" stroke="#bbb" stroke-width="2" stroke-dasharray="2 2"/></svg></div>
     <div class="tri"><svg class="i16" viewBox="0 0 16 16"><path d="M8 0v16M0 8h16M6 2l2-2 2 2M6 14l2 2 2-2" fill="none" stroke="#6f8fe0" stroke-width="1.300"/></svg></div>
     <div class="tri"><svg class="i16" viewBox="0 0 16 16"><path d="M1 1h14v14H1z" fill="none" stroke="#7f9bf0" stroke-width="1.300" stroke-dasharray="3 2"/></svg></div>
     <div class="tri"><svg class="i16" viewBox="0 0 16 16"><path d="M1 14h14" stroke="#7fa7d8" stroke-width="2.500"/><path d="M3.500 12V5M12.500 12V5" stroke="#e08a8a" stroke-width="3"/><path d="M8 12V1" stroke="#d8e8f0" stroke-width="3"/></svg></div>
     <div class="tri"><svg class="i16"><use href="#chipb"/></svg></div>
     <div><svg class="i16" viewBox="0 0 16 16"><circle cx="8" cy="8" r="4.500" fill="none" stroke="#f5c800" stroke-width="5"/></svg></div>
     <div><svg class="i18" viewBox="0 0 16 16"><circle cx="6" cy="6" r="3.500" fill="none" stroke="#f5c800" stroke-width="4"/><path d="M10 5h5" stroke="#3fa83f" stroke-width="3"/><path d="M6 9v7" stroke="#e0a020" stroke-width="2.500"/></svg></div>
     <div class="tri"><span class="floatA">A</span></div>
     <div class="tri"><svg class="i16" viewBox="0 0 16 16"><path d="M1 15L15 1" stroke="#5aa2f0" stroke-width="2.200"/></svg></div>
     <div class="tri"><svg class="i16" viewBox="0 0 16 16"><path d="M1 1h14v14H1z" fill="#333" stroke="#e88ae0" stroke-width="1.400"/><path d="M4.500 11.500l7-7" stroke="#d8a040" stroke-width="2"/></svg></div>
     <div class="tri"><svg class="i16" viewBox="0 0 16 16"><path d="M1 1v14h14V1M4 12V6M8 12V4M12 12V6" fill="none" stroke="#8fa8c8" stroke-width="1.300"/></svg></div>
     <div><svg class="i16" viewBox="0 0 16 16"><path d="M0 0h16v16H0z" fill="#e8f0f8"/><path d="M3 11l3-6 3 3 2-3 3 6z" fill="#3f6fa8"/></svg></div>
    </div>
   </div>
   <div class="laytabs d-flex align-items-center">
    <div class="lsb d-flex align-items-center flex-shrink-0"><i></i><span class="ps-1 ms-1">LS</span></div>
    <div class="pgr d-flex align-items-center justify-content-around flex-shrink-0"><svg width="6" height="9"><path d="M5 0L1 4.500 5 9z" fill="#888"/></svg><i style="width:1px;height:22px;background:#222"></i><svg width="6" height="9"><path d="M1 0l4 4.500L1 9z" fill="#fff"/></svg></div>
    <div class="ly on w1 d-flex align-items-center"><i class="c-r"></i><b>[1] Top Layer</b></div>
    <div class="ly w2 d-flex align-items-center"><i class="c-b"></i>[2] Bottom Layer</div>
    <div class="ly w3 d-flex align-items-center"><i class="c-m"></i>Mechanical 1</div>
    <div class="ly w4 d-flex align-items-center"><i class="c-m"></i>Mechanical 13</div>
    <div class="ly w5 d-flex align-items-center"><i class="c-g"></i>Mechanical 15</div>
    <div class="ly w6 d-flex align-items-center"><i class="c-y"></i>Top Overlay</div>
    <div class="ly w7 d-flex align-items-center"><i class="c-o"></i>Bottom Overlay</div>
    <div class="ly w8 d-flex align-items-center"><i class="c-gy"></i>Top Paste</div>
    <div class="ly w9 d-flex align-items-center"><i class="c-dr"></i>Bottom Paste</div>
    <div class="ly w10 d-flex align-items-center"><i class="c-p"></i>Top Solder</div>
    <div class="ly w11 d-flex align-items-center"><i class="c-m"></i>Bottom Solder</div>
    <div class="ly w12 d-flex align-items-center"><i class="c-dr"></i>Drill Guide</div>
    <div class="ly w13 d-flex align-items-center"><i class="c-m"></i>Keep-</div>
   </div>
  </div>
  <!-- Properties panel -->
  <div>
   <div class="proppanel pnl">
    <div class="panelhead d-flex align-items-center"><b>Properties</b><div class="d-flex align-items-center ms-auto gap-2"><i class="caret sm me-1"></i><svg class="i12"><use href="#pinic"/></svg><svg class="i12 text-white"><use href="#xx"/></svg></div></div>
    <div class="d-flex align-items-center" style="height:52px;padding:0 11px 0 10px"><span>Pad</span><span class="ms-auto" style="margin-right:7px">3D Bodies (and 9 more)</span><div class="filt d-flex align-items-center"><div class="d-flex align-items-center justify-content-center"><svg class="i14 text-white"><use href="#funnel"/></svg></div><i class="caret sm ms-1"></i></div></div>
    <div class="searchbx d-flex align-items-center" style="margin:2px 10px 0;height:28px;gap:10px;padding-left:9px"><svg class="i14"><use href="#mag"/></svg><span>Search</span></div>
    <div class="d-flex" style="padding:15px 0 0 10px">
     <div>
      <div class="sech d-flex align-items-center"><svg width="6" height="6"><path d="M6 0v6H0z" fill="#fff"/></svg><b>Properties</b></div>
      <div class="sect" style="height:403px;padding-top:8px">
       <div class="prow d-flex align-items-center"><span class="plab">Designator</span><div class="inp d-flex align-items-center">A2</div></div>
       <div class="prow d-flex align-items-center"><span class="plab">Layer</span><div class="inp sel1 d-flex align-items-center ps-0"><i class="c-r" style="width:11px;height:26px;border-right:1px solid #222;margin-right:8px"></i>Top Layer<i class="caret ms-auto"></i></div></div>
       <div class="prow d-flex align-items-center"><span class="plab">Electrical Type</span><div class="inp sel1 d-flex align-items-center">Load<i class="caret ms-auto"></i></div></div>
       <div class="prow d-flex align-items-center"><span class="plab">Propagation Delay</span><div class="inp d-flex align-items-center">0ps</div></div>
       <div class="prow d-flex align-items-center"><span class="plab">Pin Package Length</span><div class="inp d-flex align-items-center">0mm</div></div>
       <div class="prow d-flex align-items-center"><span class="plab">Jumper</span><div class="inp d-flex align-items-center justify-content-between" style="width:75px;padding-right:5px">0<div><svg class="i12"><path d="M2 7l4-4 4 4" fill="none" stroke="#fff" stroke-width="1.400"/></svg><svg class="i12"><path d="M2 4l4 4 4-4" fill="none" stroke="#fff" stroke-width="1.400"/></svg></div></div></div>
       <hr>
       <div class="prow d-flex align-items-center"><span class="plab">Template</span><div class="inp sel1 d-flex align-items-center">c25m15p-1<i class="caret ms-auto"></i></div></div>
       <div class="prow d-flex align-items-center"><span class="plab">Library</span><span>&lt;Local&gt;</span><div class="inp d-flex align-items-center justify-content-center ms-auto" style="width:49px;background:#484848;border-color:#393939;margin-right:7px"><svg width="18" height="10"><path d="M7 1.500H5a3.500 3.500 0 0 0 0 7h2M11 1.500h2a3.500 3.500 0 0 1 0 7h-2M6 5h6" fill="none" stroke="#888" stroke-width="2"/></svg></div></div>
       <hr style="margin-top:13px">
       <div class="d-flex"><div>
        <div class="prow d-flex align-items-center"><span class="plab">(X/Y)</span><div class="inp d-flex align-items-center" style="width:97px;margin-right:5px">0.3mm</div><div class="inp d-flex align-items-center" style="width:90px">0.35mm</div></div>
        <div class="prow d-flex align-items-center" style="height:32px"><span class="plab">Rotation</span><div class="inp d-flex align-items-center" style="width:192px">0.000</div></div></div>
        <div class="inp sel1 d-flex align-items-center justify-content-center" style="width:30px;height:61px;margin:3px 0 0 8px"><svg width="16" height="20"><path d="M1 9h14v10H1z" fill="#fff"/><path d="M4 5a4 4 0 0 1 8 0v4" fill="none" stroke="#fff" stroke-width="2.200"/><circle cx="8" cy="14" r="1.800" fill="#444"/></svg></div></div>
      </div>
      <div class="sech d-flex align-items-center" style="height:47px;padding-top:11px"><svg width="6" height="6"><path d="M6 0v6H0z" fill="#fff"/></svg><b>Pad Stack</b></div>
      <div class="sect" style="height:556px">
       <div class="preview"><a href="#">Hide preview</a>
        <svg width="382" height="120" viewBox="0 17 382 120" class="d-block"><path d="M131 88v19a60.500 17 0 0 0 121 0V88z" fill="url(#gDisk)"/><ellipse cx="191.500" cy="88" rx="61" ry="17" fill="#f40000"/></svg>
       </div>
       <div class="seg d-flex"><div class="on">Simple</div><div>Top-Middle-Bottom</div><div class="border-0">Full Stack</div></div>
       <div class="ptab">
        <div class="pth"><span>COPPER</span><span>X-Size</span><span>Y-Size</span><span>Shape</span><span>Relief</span></div>
        <div class="ptr"><div><i class="bar c-r"></i><svg width="6" height="10"><path d="M0 0l5 5-5 5z" fill="#fff"/></svg>Top L...</div><div>0.25mm</div><div>0.25mm</div><div><svg class="i12"><circle cx="6" cy="6" r="5" fill="#ddd"/></svg><span class="clip" style="width:28px;margin:0 9px 0 7px">Round</span><i class="caret"></i></div><div><div class="tk ms-auto"></div></div></div>
        <div class="pth"><span>PASTE</span><span>Expansion</span><span>%</span><span>Shape</span><span>Enabled</span></div>
        <div class="ptr"><div><i class="bar c-gy"></i><svg width="6" height="10"><path d="M0 0l5 5-5 5z" fill="#fff"/></svg>Top P...</div><div>-1mm</div><div><span class="clip" style="width:64px">4800.028%</span></div><div><span class="clip" style="width:39px;margin:0 9px 0 8px">Manual</span><i class="caret"></i></div><div><div class="tk ms-auto"><svg class="i18"><path d="M5 9l3 3 6-6" fill="none" stroke="#eee" stroke-width="1.600"/></svg></div></div></div>
        <div class="pth"><span>SOLDER</span><span class="border-0">Expansion</span><span></span><span>Shape</span><span>Tented</span></div>
        <div class="ptr"><div><i class="bar c-p"></i><svg width="6" height="10"><path d="M0 0l5 5-5 5z" fill="#fff"/></svg>Top S...</div><div>-0.05mm</div><div></div><div><span class="clip" style="width:39px;margin:0 9px 0 8px">Manual</span><i class="caret"></i></div><div><div class="tk ms-auto"></div></div></div>
       </div>
      </div>
      <div class="sech d-flex align-items-center" style="height:47px;padding-top:12px"><svg width="6" height="6"><path d="M6 0v6H0z" fill="#fff"/></svg><b>Testpoint</b></div>
      <div class="sect d-flex align-items-center" style="height:34px;padding-top:14px"><span class="plab">Fabrication</span><div class="tk" style="margin-left:8px"></div><span style="margin:0 8px 0 5px">Top</span><div class="tk" style="background:#484848;border-color:#3a3a3a"></div><span style="margin-left:5px;color:#808080">Bottom</span></div>
      <div style="margin:2px 0 0 -5px">1 object is selected</div>
     </div>
     <div class="scrollcol d-flex flex-column align-items-center"><i class="caret up" style="border-top-color:#888;margin-bottom:8px"></i><i class="thumb1"></i><i class="caret sm" style="border-top-color:#888;margin-top:65px"></i></div>
    </div>
   </div>
   <div class="btabs d-flex"><div style="width:96px">Components</div><div style="width:147px">Comments and Tasks</div><div class="on" style="width:78px">Properties</div></div>
  </div>
 </div>
 <div class="statusb d-flex align-items-center"><span style="width:168px;padding-left:6px">X:0.675mm Y:-0.675mm</span><span class="ms-1" style="width:120px">Grid: 0.025mm</span><span style="width:355px">(Hotspot Snap)</span><i class="vsep"></i><i class="vsep" style="margin-left:645px"></i><div class="mbtn ms-auto me-1 d-flex align-items-center justify-content-center" style="width:51px;height:23px">Panels</div></div>
 <div class="taskb d-flex align-items-center">
  <div class="cell" style="width:59px"><svg class="i22"><use href="#start"/></svg></div>
  <div class="tbx d-flex align-items-center"><svg class="i22" style="margin:0 15px 0 13px"><use href="#mag2"/></svg><span>Type here to search</span>
   <svg width="98" height="48" viewBox="0 0 98 48" class="ms-auto"><path d="M0 46l12-15h74l12 15v2H0z" fill="#e8c9a0"/><path d="M0 46h98v2H0z" fill="#c9a070"/><path d="M14 18l12-2 14-6 4 25-14 3-12 5z" fill="#f4f4ee" stroke="#3f8f5a" stroke-width="2"/><path d="M19 22l8-2M20 27l8-2M33 17l6-2M33 23l8-2M21 32l8-2M34 29l7-2" stroke="#99a"/><path d="M34 26L45 9l5 3-11 16-6 2z" fill="#f5a020"/><path d="M45 9l2-3 5 3-2 3z" fill="#f06a5a"/><path d="M60 18c0-14 26-14 26 0v20c0 5-26 5-26 0z" fill="#1f7ff0"/><path d="M63 26h20v9H63z" fill="#0d5cc8"/><path d="M67 8c0-8 12-8 12 0" fill="none" stroke="#1450b0" stroke-width="2.500"/><path d="M65 37h16v3H65z" fill="#c08af0"/></svg></div>
  <div class="cell"><svg class="i24"><use href="#tview"/></svg></div><div class="cell"><svg class="i30"><use href="#copilot"/></svg></div>
  <div class="cell run"><svg class="i30"><use href="#edge"/></svg></div><div class="cell run hot"><svg class="i28"><use href="#brave"/></svg></div><div class="cell run"><svg class="i28"><use href="#expl"/></svg></div><div class="cell run"><svg class="i28"><use href="#alt"/></svg></div><div class="cell run"><svg class="i30"><use href="#wapp"/></svg></div><div class="cell run hot2"><svg class="i28"><use href="#word"/></svg></div>
  <div class="ms-auto d-flex align-items-center">
   <svg width="30" height="30" style="margin-right:11px"><path d="M19 3c10 4 10 20-3 24-5 1-9-1-11-4 10 1 16-8 14-20z" fill="#f59a23"/><path d="M2 12c-2-4 2-7 4-6 1-5 8-4 8 0 4 0 4 6 1 6zM15 26c-2-4 1-6 3-5 1-4 7-3 7 1 4 0 4 5 1 5H17z" fill="#bcd6fa"/></svg>
   <span style="font-size:18px;width:170px">60°F  Partly cloudy</span>
   <div class="gr tray">
    <svg class="i18"><path d="M1 13l8-8 8 8" fill="none" stroke="#fff" stroke-width="1.500"/></svg>
    <svg class="i16"><path d="M2 4h9v8H2zM11 7l4-2v6l-4-2M3 1h8M3 15h8" fill="none" stroke="#fff" stroke-width="1.300"/></svg>
    <svg width="20" height="14"><path d="M4 3h15v9H4z" fill="none" stroke="#fff" stroke-width="1.500"/><path d="M6 5h11v5H6z" fill="#fff"/><path d="M0 2h5v4H0z" fill="#fff"/></svg>
    <svg class="i16"><path d="M1 15A14 14 0 0 1 15 1M5 15A10 10 0 0 1 15 5M9 15a6 6 0 0 1 6-6" fill="none" stroke="#ddd" stroke-width="1.400"/><circle cx="13.500" cy="13.500" r="2" fill="#fff"/></svg>
    <svg class="i20"><path d="M1 7h3l4-4v13l-4-4H1zM11 7q2 2.500 0 5M14 5q3 4.500 0 9M17 3q4 6.500 0 13" fill="none" stroke="#fff" stroke-width="1.300"/></svg>
    <span style="font-size:15px">ENG</span>
    <div class="clock">23:57<br>23-09-2024</div>
    <svg width="30" height="26"><path d="M1 1h20v17H9l-5 4v-4H1z" fill="#fff"/><path d="M4 6h14M4 10h14M4 14h9" stroke="#26343a" stroke-width="1.500"/><circle cx="20" cy="18" r="8.500" fill="#3c484d" stroke="#999"/><text x="20" y="23" font-size="13" fill="#fff" text-anchor="middle" font-weight="600">2</text></svg>
    <i style="width:1px;height:50px;background:#777"></i>
   </div>
  </div>
 </div>
</section>

<!-- Monitor two: Brave with Acrobat viewer -->
<section class="mon2 ms-auto">
 <div class="tabstrip d-flex align-items-center">
  <div class="pin"><svg class="i16"><path d="M1 6h3l4-4v12l-4-4H1zM11 5q2 3 0 6M13 2.500q4 5.500 0 11" fill="none" stroke="#fff" stroke-width="1.500"/></svg></div>
  <div class="pin"><svg width="20" height="15"><path d="M2 15V2" stroke="#4285f4" stroke-width="4"/><path d="M18 15V2" stroke="#34a853" stroke-width="4"/><path d="M1 2l9 7 9-7" fill="none" stroke="#ea4335" stroke-width="4"/></svg></div>
  <div class="pin"><svg class="i20"><path d="M6 1h13v11H6z" fill="#28a8ea"/><path d="M6 9l13 2v8H6z" fill="#0f5fb8"/><path d="M0 5h11v11H0z" fill="#0f6cbd"/><circle cx="5.500" cy="10.500" r="2.700" fill="none" stroke="#fff" stroke-width="1.600"/></svg></div>
  <div class="pin"><svg class="i20"><rect width="20" height="20" rx="2" fill="#34a853"/><path d="M10 3v14M4 8h12" stroke="#fff" stroke-width="2.500"/></svg></div>
  <div class="pin"><svg class="i22"><circle cx="11" cy="11" r="10.500" fill="#fff"/><path d="M8 21v-4c-3 0-3-2-4-3M8 17c-5-1-5-6-3-8V6l3 1.500h6L17 6v3c2 2 2 7-3 8v5H8z" fill="#630e33"/></svg></div>
  <div class="pin"><svg class="i20"><rect width="20" height="20" rx="4" fill="#0c0c0c"/><g fill="none" stroke="#fff" stroke-width="1.200"><path d="M10 6.500l3 1.750v3.500l-3 1.750-3-1.750v-3.500z"/><circle cx="10" cy="10" r="6.300" stroke-dasharray="5 1.600"/><path d="M7 8.250V5M10 6.500l4-2M13 8.250l2.500 2M13 11.750V15M10 13.500l-4 2M7 11.750l-2.500-2"/></g></svg></div>
  <div class="pin"><svg class="i20"><rect width="20" height="20" rx="2" fill="#0a66c2"/><text x="10" y="16" font-size="15" font-weight="700" fill="#fff" text-anchor="middle">in</text></svg></div>
  <div class="pin"><svg class="i20" style="overflow:hidden"><rect width="20" height="20" fill="#0b8cf5"/><text x="10.500" y="15" font-size="12" font-weight="600" fill="#fff" text-anchor="middle">JLC</text></svg></div>
  <div class="pin"><svg class="i20"><path d="M12 4V1.500H4L1 4v6l3 2.500h4M8 7v9l2 3h5l3-3V8M5 5v5M13 8h6M8 8h4" fill="none" stroke="#111" stroke-width="4"/><path d="M12 5V2H4L2 4v6l2 2h4V8h4M10 12v5h5l2-2V8h-2" fill="none" stroke="#cfb87c" stroke-width="2.500"/></svg></div>
  <div class="pin" style="margin-right:11px"><svg class="i20"><path d="M6 1h13v9H6z" fill="#33c481"/><path d="M6 10h13v9H6z" fill="#107c41"/><path d="M0 5h11v11H0z" fill="#0f6b38"/><path d="M3 7l5 7M8 7l-5 7" stroke="#fff" stroke-width="1.700"/></svg></div>
  <div class="tb" style="width:87.5px;padding-left:8px;gap:9px;margin-left:3px"><svg class="i22" style="width:20px"><text x="9" y="19" font-family="Liberation Serif" font-size="25" fill="#f1641e" text-anchor="middle">E</text></svg><span>Fork-j</span></div>
  <div class="tb"><svg class="dlogo"><use href="#dg"/></svg><span>BMI27</span></div>
  <div class="tb"><svg class="dlogo"><use href="#dg"/></svg><span>BMI27</span></div>
  <div class="tb"><svg class="alogo2"><use href="#acr"/></svg><span>bst-bm</span></div>
  <div class="tb"><svg class="dlogo"><use href="#dg"/></svg><span>BMP58</span></div>
  <div class="tb"><svg class="alogo2"><use href="#acr"/></svg><span>bst-bm</span></div>
  <div class="tb"><svg class="dlogo"><use href="#dg"/></svg><span>BMP58</span></div>
  <div class="tb" style="width:96px"><svg class="i20"><circle cx="10" cy="10" r="6" fill="none" stroke="#d0282e" stroke-width="2.500" stroke-dasharray="3 1.700"/><circle cx="10" cy="10" r="3" fill="none" stroke="#d0282e" stroke-width="1.500"/></svg><span>What</span></div>
  <div class="tb" style="width:96px"><svg class="i20"><path d="M1 1h12v18H1z" fill="#e8f2fa"/><path d="M1 1h3v18H1z" fill="#4a90d0"/><path d="M9 8h10v12H9z" fill="#fff" stroke="#99b"/><path d="M6 4h6M11 12h6M11 15h6" stroke="#89a"/></svg><span>Ultra</span></div>
  <div class="tb border-0"><svg class="dlogo"><use href="#dg"/></svg><span>OPT30</span></div>
  <div class="tb act"><svg class="alogo2"><use href="#acr"/></svg><span>op</span><svg class="i14 text-white" style="margin-left:6px"><use href="#xx"/></svg></div>
  <div class="tb" style="width:99px;padding-left:20px"><svg class="dlogo"><use href="#dg"/></svg><span>OPT30</span></div>
  <svg class="i16" style="margin-left:15px"><path d="M8 1v14M1 8h14" stroke="#d3b4c1" stroke-width="1.500"/></svg><svg class="i14" style="margin-left:72px"><path d="M2 4l5 6 5-6" fill="none" stroke="#fff" stroke-width="2"/></svg><svg class="i14" style="margin-left:37px"><path d="M0 7h13" stroke="#fff" stroke-width="1.300"/></svg><svg class="i14" style="margin-left:42px"><path d="M1 3.500h9v9.500H1zM4 3V1h9v9.500h-2.500" fill="none" stroke="#fff" stroke-width="1.200"/></svg><svg class="i14" style="margin-left:44px"><path d="M0 0l14 14M14 0L0 14" stroke="#fff" stroke-width="1.200"/></svg>
 </div>
 <div class="addr d-flex align-items-center">
  <div class="gr nav1"><svg class="i16" style="color:#d58aa8"><path class="ln" d="M10 0L4 8l6 8"/></svg><svg class="i16" style="color:#d58aa8"><path class="ln" d="M4 0l6 8-6 8"/></svg><svg class="i20"><path d="M17 6a8.500 8.500 0 1 0 1.500 5M18 1v6h-5" fill="none" stroke="#fff" stroke-width="2"/></svg><svg class="i18"><path d="M3 1h12v16l-6-5-6 5z" fill="none" stroke="#fff" stroke-width="1.800"/></svg></div>
  <div class="urlb d-flex align-items-center"><svg class="i18"><use href="#puz"/></svg><span style="margin-left:7px;width:364px">Adobe Acrobat: PDF edit, convert, sign tools</span><span style="color:#cb9db1;width:629px">chrome-extension://efaidnbmnnnibpcajpcglclefindmkaj/https://www.ti.com/li...</span><i style="width:1px;height:20px;background:#b0708c"></i><svg width="18" height="22" style="margin:0 22px 0 15px" viewBox="0 0 24 28"><path d="M4 2l8-2 8 2 3 4-3 15-8 7-8-7L1 6z" fill="#3b4455"/><path d="M7 6l5 1 5-1 3 4-4 11-4 3-4-3L4 10z" fill="#fff"/><path d="M7 11l4 1-1 2zM17 11l-4 1 1 2zM12 13v5M9 18l3 2 3-2" stroke="#3b4455" fill="none" stroke-width="1.500"/></svg><svg width="22" height="20"><path d="M11 0L0 20l11-7z" fill="#ff4724"/><path d="M11 0l11 20-11-7z" fill="#9e1f63"/><path d="M0 20h22l-11-7z" fill="#662d91"/><path d="M11 7l-4 8h8z" fill="#fff"/></svg></div>
  <div class="gr exts"><svg class="i22"><use href="#puz"/></svg><svg class="i20"><path d="M7 16V3l11-2v13" fill="none" stroke="#fff" stroke-width="1.800"/><circle cx="4" cy="16" r="3" fill="none" stroke="#fff" stroke-width="1.800"/><circle cx="15" cy="14" r="3" fill="none" stroke="#fff" stroke-width="1.800"/></svg><svg class="i20" viewBox="0 0 24 24"><use href="#dl"/></svg><svg class="i20"><path d="M1 2h17v16H1z" fill="none" stroke="#fff" stroke-width="2"/><path d="M11 2h7v16h-7z" fill="#fff"/></svg><svg class="i20"><path d="M1 2h14v3M1 2v16h17V6H3M18 9h-5a3 3 0 0 0 0 6h5" fill="none" stroke="#fff" stroke-width="1.700"/></svg><svg class="i20"><path d="M9 1l2 6 6 2-6 2-2 6-2-6-6-2 6-2zM16 13v6M13 16h6" fill="none" stroke="#fff" stroke-width="1.700"/></svg></div>
  <div class="vpn d-flex align-items-center justify-content-center gap-1"><svg class="i14"><circle cx="7" cy="7" r="6.500" fill="#b9aac0"/><path d="M4 7h6" stroke="#7d1840" stroke-width="2"/></svg><span>VPN</span></div>
  <svg class="i20" style="margin-left:11px"><path d="M1 3h18M1 10h18M1 17h18" stroke="#fff" stroke-width="1.800"/></svg>
 </div>
 <div class="acro d-flex align-items-center">
  <div class="alogo d-flex align-items-center justify-content-center" style="margin:0 25px 0 26px"><svg class="i24"><use href="#acr"/></svg></div><i class="vs"></i>
  <span style="margin-left:26px;width:87px">All tools</span><span style="width:57px">Edit</span><span style="width:86px">Convert</span><span style="width:530px">E-Sign</span>
  <svg class="i20"><circle cx="10" cy="10" r="9" class="ln"/><ellipse cx="10" cy="10" rx="4" ry="9" class="ln"/><path class="ln" d="M1 10h18"/></svg>
  <b style="margin-left:11px;color:#dcdcdc;letter-spacing:-.045em" class="nw">ti.com  /  </b><b style="color:#eee;letter-spacing:-.04em" class="nw">opt3007</b><svg class="i12" style="margin-left:18px"><path d="M2 4l4 4 4-4" fill="none" stroke="#b9b9b9" stroke-width="1.500"/></svg>
  <div class="d-flex align-items-center ms-auto" style="padding-right:14px">
   <svg class="i22" style="margin-right:24px"><circle cx="9" cy="9" r="7" class="ln"/><path class="ln" d="M14 14l7 7"/></svg><svg class="i22" style="margin-right:24px"><path class="ln" d="M1 3v16M5 3v16M9 2h7l5 5v12H9zM15 2v6h6"/></svg><svg class="i22" style="margin-right:23px" viewBox="0 0 24 24"><use href="#dl"/></svg><svg class="i22" style="margin-right:24px"><path class="ln" d="M5 7V1h12v6M5 16H1V7h20v9h-4M5 12h12v9H5zM8 16h6"/></svg><svg width="18" height="4" style="margin-right:17px"><path d="M0 0h3v3H0zM7 0h3v3H7zM14 0h3v3h-3z" fill="#b9b9b9"/></svg><i class="vs" style="margin-right:14px"></i>
   <div class="shareb d-flex align-items-center justify-content-center"><b>Share</b></div>
   <div class="aib d-flex align-items-center justify-content-center gap-1" style="margin:0 14px"><svg class="i24"><use href="#aic"/></svg><b>AI Assistant</b></div><i class="vs"></i><b style="margin-left:12px;color:#ddd;letter-spacing:-.01em">Sign in</b>
  </div>
 </div>
 <div class="d-flex">
  <div class="viewer">
   <div class="d-flex">
    <div class="lefta"><div class="ltool clip">
     <div class="s t"><svg width="14" height="20"><path d="M1 0l12 12H8.500l3 6.500-3 1.500-3-6.500L1 17z" fill="#fff"/></svg></div>
     <div class="t"><svg class="i22"><path class="ln" d="M11 1a10 10 0 1 0 0 20h10V11A10 10 0 0 0 11 1zM7 9h9M7 13h6"/></svg></div>
     <div class="t"><svg class="i22"><path class="ln" d="M6 13L17 1l4 4L10 17z"/><path d="M1 21c0-4 2-5 4-6l3 3c0 2-2 3-7 3z" fill="currentColor"/><path d="M10 21l4-4h7l-3 4z" fill="#777"/></svg></div>
     <div><svg class="i22"><path class="ln" d="M12 13c4 1 9 0 9-4 0-6-20-6-20 2 0 6 8 8 15 6"/></svg></div>
     <div class="t"><svg class="i22"><path d="M1 1h20v20H1z" fill="none" stroke="currentColor" stroke-width="2" stroke-dasharray="3 2"/><text x="11" y="17" font-size="15" text-anchor="middle" fill="currentColor" font-weight="600">A</text></svg></div>
     <div class="t"><svg class="i22"><path class="ln" d="M1 21L4 8l8-4 5 5-3 8zM12 4l2-3 5 5-2 3M1 21l8-8M12 20l5-4-1 4 3-2 2 2"/></svg></div>
    </div></div>
    <div class="page">
     <svg width="1335" height="828" viewBox="1459 1621 1335 828">
      <defs><marker id="ah" viewBox="0 0 14 8" refX="14" refY="4" markerWidth="14" markerHeight="8" markerUnits="userSpaceOnUse" orient="auto-start-reverse"><path d="M0 1l14 3-14 3z"/></marker></defs>
      <path d="M1575 1621v828M2679 1621v828" fill="none" stroke="#111" stroke-width="2"/>
      <g fill="none" stroke="#222" stroke-width="1.200">
       <g stroke-dasharray="6 4"><circle cx="2027.500" cy="1876.700" r="42.400"/><circle cx="2027.500" cy="1996.300" r="42.400"/><circle cx="2027.500" cy="2115.500" r="42.400"/><circle cx="2232.400" cy="1876.700" r="42.400"/><circle cx="2232.400" cy="1996.300" r="42.400"/><circle cx="2232.400" cy="2115.500" r="42.400"/></g>
       <path d="M2027.500 1756v55M2027.500 1820v8M2027.500 1836v28M2027.500 1873v8M2027.500 1889v36M2027.500 1949v37M2027.500 1992v8M2027.500 2007v37"/>
       <path d="M1924 1876.700h42M1973 1876.700h8M1988 1876.700h28M2024 1876.700h8M2039 1876.700h36"/>
       <path d="M1924 1996.300h42M1973 1996.300h8M1988 1996.300h28M2024 1996.300h8M2039 1996.300h79M2126 1996.300h8M2141 1996.300h25M2173 1996.300h9M2190 1996.300h28M2225 1996.300h8M2240 1996.300h28M2275 1996.300h8M2284 1996.300h24"/>
       <path d="M2129.700 1756v58M2129.700 1822v8M2129.700 1837v35M2129.700 1880v7M2129.700 1895v34M2129.700 1937v7M2129.700 1953v34M2129.700 1992v8M2129.700 2007v33M2129.700 2046v8M2129.700 2062v34M2129.700 2104v8M2129.700 2118v34M2129.700 2160v30"/>
       <path d="M2129.700 1763.700h22"/><path d="M2028 1763.700h101" marker-start="url(#ah)" marker-end="url(#ah)"/>
       <path d="M1931.500 1919v-42" marker-end="url(#ah)"/><path d="M1931.500 1943v53" marker-end="url(#ah)"/>
       <path d="M1924 1780.500h17l69.500 78" marker-end="url(#ah)"/><path d="M1929 2052.700h18l46-32.700" marker-end="url(#ah)"/><path d="M2021 2203.700h24l46-54" marker-end="url(#ah)"/>
      </g>
      <path d="M2058.300 1843h143.300v4.500A42.400 42.400 0 0 0 2201.600 1905.800V1967A42.400 42.400 0 0 0 2201.600 2025.500V2086.300A42.400 42.400 0 0 0 2201.600 2144.800V2149.400H2058.300V2144.800A42.400 42.400 0 0 0 2058.300 2086.300V2025.500A42.400 42.400 0 0 0 2058.300 1967V1905.800A42.400 42.400 0 0 0 2058.300 1847.500z" fill="none" stroke="#000" stroke-width="2"/>
      <g fill="none" stroke="#00a800" stroke-width="2"><circle cx="2027.500" cy="1876.700" r="25.700"/><circle cx="2027.500" cy="1996.300" r="25.700"/><circle cx="2027.500" cy="2115.500" r="25.700"/><circle cx="2232.400" cy="1876.700" r="25.700"/><circle cx="2232.400" cy="1996.300" r="25.700"/><circle cx="2232.400" cy="2115.500" r="25.700"/></g>
      <g font-family="Liberation Sans" font-size="17" letter-spacing="0" fill="#000" transform="translate(0 -.8)">
       <text x="2158" y="1770.500" textLength="73">(0.3) TYP</text><text x="1890" y="1938.500" textLength="83">(0.35) TYP</text>
       <g text-anchor="end"><text x="1917" y="1787.500" textLength="78">0.15) TYP</text><text x="1917" y="1805.500" textLength="124">SOLDER MASK</text><text x="1917" y="1824.500" textLength="79">OPENING</text><text x="1922.500" y="2059.500" textLength="39">0.25)</text><text x="1923" y="2078.500" textLength="124">METAL UNDER</text><text x="1923" y="2096.500" textLength="124">SOLDER MASK</text><text x="2021" y="2210.500" textLength="112">PCB CUTOUT</text><text x="2021" y="2229.500" textLength="316">(REFER TO THE LAYOUT GUIDELINES</text><text x="2021" y="2247.500" textLength="259">SECTION OF THE DATASHEET)</text></g>
       <text x="1818" y="1787.500">(</text><text x="1861.500" y="2059.500">(</text>
       <g text-anchor="middle"><text x="2013" y="1826.500">1</text><text x="2232" y="1827">2</text><text x="1971.700" y="1858">A</text><text x="1973" y="1985.500">B</text><text x="1972" y="2124">C</text><text x="2130.600" y="2211" textLength="52">SYMM</text><text x="2321" y="1984.500" textLength="52">SYMM</text><text x="2128" y="2336" font-size="21.500" textLength="272">LAND PATTERN EXAMPLE</text><text x="2128" y="2355.500" textLength="102" xml:space="preserve">SCALE:  55X</text></g>
      </g>
      <g fill="none" stroke="#222" stroke-width="1.100"><circle cx="1830" cy="1781" r="6"/><path d="M1824 1790l11-18"/><circle cx="1873" cy="2053" r="6"/><path d="M1867 2062l11-18"/><path d="M2131 2219a6 6 0 1 0 0 9M2127 2214v18h7M2321 1993a6 6 0 1 0 0 9M2317 1987v18h7"/></g>
     </svg>
    </div>
    <div class="righta"></div>
    <div class="vbar d-flex flex-column align-items-center"><i class="caret up mt-2"></i><i class="vthumb"></i><i class="caret mt-auto mb-2"></i></div>
   </div>
   <div class="hbar d-flex align-items-center"><svg width="6" height="9" style="margin-left:9px"><path d="M6 0v9L0 4.500z" fill="#999"/></svg><i class="hthumb"></i><svg width="6" height="9" style="margin-left:auto;margin-right:9px"><path d="M0 0v9l6-4.500z" fill="#fff"/></svg><i style="width:21px;height:21px;background:#111"></i></div>
   <div class="askb d-flex align-items-center"><svg class="i24" style="margin:0 8px 0 20px"><use href="#aic"/></svg><b style="width:175px">Ask AI Assistant</b><div class="askin d-flex align-items-center justify-content-between"><span style="letter-spacing:0">Ask a question about this document</span><div class="sendb d-flex align-items-center justify-content-center"><svg class="i20"><path class="ln" d="M1 2l18 8-18 8 3-8zM4 10h14"/></svg></div></div><svg width="18" height="4" style="margin-left:27px"><path d="M0 0h3v3H0zM7 0h3v3H7zM14 0h3v3h-3z" fill="#ccc"/></svg></div>
  </div>
  <div class="rpanel gr align-content-start">
   <svg class="i22" style="color:#a3a0ff"><path class="ln" d="M12 4H1v15h20v-7M5 9h5M5 12h4M5 15h8"/><path d="M18 0l1.200 3.800L23 5l-3.800 1.200L18 10l-1.200-3.800L13 5l3.800-1.200zM13 9l3 1.500-3 2z" fill="currentColor"/></svg>
   <hr>
   <svg class="i22"><path class="ln" d="M1 1h15v11H9l-4 4v-4H1zM19 6h2v10h-2v4l-4-4h-3"/></svg>
   <svg class="i22"><path class="ln" d="M2 1h13v19l-6.500-5L2 20z"/><path d="M18 4h4M18 8h4M18 12h4" stroke="currentColor" stroke-width="1.600"/></svg>
   <svg class="i18"><path d="M1 1h6v6H1zM11 1h6v6h-6zM1 11h6v6H1zM11 11h6v6h-6z" fill="none" stroke="currentColor" stroke-width="2"/></svg>
   <hr>
   <i></i>
   <div class="pgn d-flex align-items-center justify-content-center"><b>36</b></div>
   <b>38</b>
   <svg class="i16"><use href="#chu"/></svg>
   <i></i>
   <svg class="i16"><use href="#chd"/></svg>
   <hr class="sh">
   <div class="tri"><svg class="i22"><path class="ln" d="M8 7a6 6 0 1 0 8 8M12 2a5 5 0 0 0 8 6 5.500 5.500 0 0 1-8 1.500A5.500 5.500 0 0 1 12 2zM1 11h.5M3 5l.7.7M3 18l.7-.7M10 21v.5"/></svg></div>
   <svg class="i20"><path class="ln" d="M18 6a9 9 0 1 0 0 8M19 1v6h-6"/></svg>
   <div class="tri"><svg class="i20"><path class="ln" d="M1 1h12l5 5v13H1zM12 1v6h6M5 11v4h4M9 9h4v3"/></svg></div>
   <hr class="sh">
   <svg class="i20"><circle cx="8" cy="8" r="7" class="ln"/><path class="ln" d="M13 13l6 6M5 8h6M8 5v6"/></svg>
   <svg class="i20"><circle cx="8" cy="8" r="7" class="ln"/><path class="ln" d="M13 13l6 6M5 8h6"/></svg>
  </div>
 </div>
 <div class="taskb d-flex align-items-center">
  <div class="cell" style="width:58px"><svg class="i22"><use href="#start"/></svg></div><div class="cell"><svg class="i28"><use href="#mag2"/></svg></div><div class="cell" style="width:58px"><svg class="i24"><use href="#tview"/></svg></div><div class="cell" style="margin-left:3px"><svg class="i30"><use href="#copilot"/></svg></div>
  <div class="cell run"><svg class="i30"><use href="#edge"/></svg></div><div class="cell run hot"><svg class="i28"><use href="#brave"/></svg></div><div class="cell run"><svg class="i28"><use href="#expl"/></svg></div><div class="cell run"><svg class="i28"><use href="#alt"/></svg></div><div class="cell run"><svg class="i30"><use href="#wapp"/></svg></div><div class="cell run"><svg class="i28"><use href="#word"/></svg></div>
  <div class="clock ms-auto" style="margin-right:8px">23:57<br>23-09-2024</div>
 </div>
</section>
</main>
</body>
</html>
